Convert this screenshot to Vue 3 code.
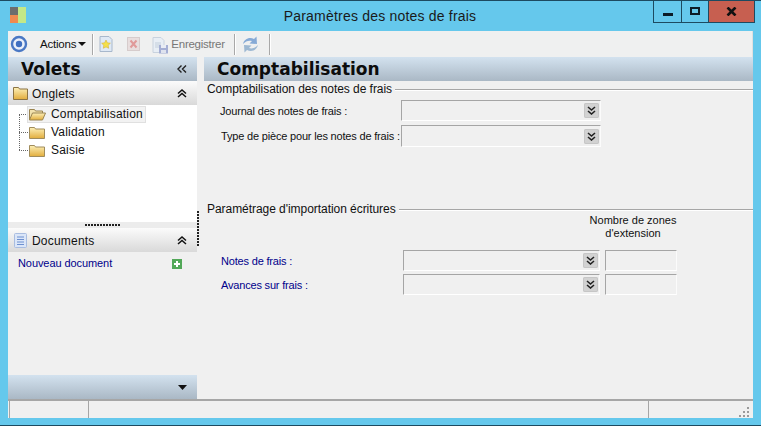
<script setup>
const tree = [
  { label: 'Comptabilisation', open: true },
  { label: 'Validation' },
  { label: 'Saisie' },
]

const importRows = ['Notes de frais :', 'Avances sur frais :']
</script>

<template>
  <div class="window">
    <svg width="0" height="0" class="defs">
      <defs>
        <linearGradient id="gold" x1="0" y1="0" x2="0" y2="1">
          <stop offset="0" stop-color="#fdf0b8" />
          <stop offset="1" stop-color="#e2ad3c" />
        </linearGradient>
      </defs>
    </svg>

    <div class="titlebar">
      <svg class="app-icon" width="16" height="16" viewBox="0 0 16 16">
        <rect x="0" y="0" width="8" height="8" fill="#6d6d6d" />
        <rect x="0" y="8" width="8" height="8" fill="#f08a50" />
        <rect x="8" y="0" width="8" height="16" fill="#c4e888" />
      </svg>
      <div class="title">Paramètres des notes de frais</div>
      <div class="win-buttons">
        <div class="win-btn min"><span class="min-bar"></span></div>
        <div class="win-btn max"><span class="max-box"></span></div>
        <div class="win-btn close">
          <svg width="11" height="9" viewBox="0 0 11 9">
            <path d="M1.500 0.500 L9.500 8.500 M9.500 0.500 L1.500 8.500" stroke="#111" stroke-width="2.600" fill="none" />
          </svg>
        </div>
      </div>
    </div>

    <div class="client">
      <div class="toolbar">
        <svg class="tool-logo" width="18" height="18" viewBox="0 0 18 18">
          <circle cx="9" cy="9" r="7" fill="#eaf0fa" stroke="#4a78c4" stroke-width="2.400" />
          <circle cx="9" cy="9" r="3.200" fill="#3f6fc0" />
        </svg>
        <span class="actions">Actions</span>
        <span class="caret"></span>
        <span class="sep first"></span>
        <svg class="tool-icon" width="14" height="16" viewBox="0 0 14 16">
          <path d="M1 .5h9l3 3v12H1z" fill="#dfe9f5" stroke="#a8b8cc" />
          <path d="M7 4l1.400 2.800 3 .4-2.200 2.100.5 3L7 10.900l-2.700 1.400.5-3-2.200-2.100 3-.4z" fill="#f4e04a" stroke="#d0a830" stroke-width=".5" />
        </svg>
        <svg class="tool-icon del" width="14" height="16" viewBox="0 0 14 16">
          <rect x=".5" y="1.500" width="12" height="13" fill="#e8dede" stroke="#d6cccc" />
          <path d="M3.500 4.500l6 7M9.500 4.500l-6 7" stroke="#e09a9a" stroke-width="2" />
        </svg>
        <svg class="tool-icon save" width="17" height="17" viewBox="0 0 17 17">
          <path d="M1 .5h8l3 3v12H1z" fill="#e8eef5" stroke="#c8d2de" />
          <path d="M3 6h6M3 8h6M3 10h4" stroke="#c2cedb" />
          <rect x="7" y="8" width="9" height="8.500" fill="#a4aed4" />
          <rect x="9" y="8" width="5" height="3" fill="#e8ecf4" />
          <rect x="9" y="13" width="5" height="3" fill="#dfe3ee" />
        </svg>
        <span class="save-label">Enregistrer</span>
        <span class="sep second"></span>
        <svg class="tool-icon refresh" width="17" height="17" viewBox="0 0 17 17">
          <path d="M1 8C2 3.500 7 0.500 12 3l2.500-2.500.5 7.500-7.500-.5 2.500-2.500C7 4 3.500 5 1 8z" fill="#86aad6" />
          <path d="M16 9c-1 4.500-6 7.500-11 5l-2.500 2.500L2 9l7.500.5L7 12c3 1 6.500 0 9-3z" fill="#9db8d2" />
        </svg>
        <span class="sep third"></span>
      </div>

      <div class="body">
        <aside class="left">
          <div class="blue-head volets">
            <span>Volets</span>
            <svg width="10" height="8" viewBox="0 0 10 8">
              <path d="M4.500 .5L1 4l3.500 3.500M9 .5L5.500 4 9 7.500" stroke="#222" stroke-width="1.400" fill="none" />
            </svg>
          </div>

          <div class="grey-head">
            <svg class="head-icon" width="15" height="14" viewBox="0 0 15 14">
              <path d="M.5 1.500h5l1 1.500h8v10.500H.5z" fill="url(#gold)" stroke="#8c7444" />
            </svg>
            <span class="head-label">Onglets</span>
            <svg class="chev" width="10" height="9" viewBox="0 0 10 9">
              <path d="M1 4.500L5 1l4 3.500M1 8L5 4.500 9 8" stroke="#111" stroke-width="1.500" fill="none" />
            </svg>
          </div>

          <div class="tree">
            <div v-for="(item, i) in tree" :key="item.label" class="tree-row" :class="{ last: i === tree.length - 1 }">
              <span class="branch"></span>
              <div class="tree-item" :class="{ selected: item.open }">
                <svg width="17" height="13" viewBox="0 0 17 13">
                  <template v-if="item.open">
                    <path d="M.5 12V1.500h5l1 1.500h7V5" fill="#f2e2ae" stroke="#9a8450" />
                    <path d="M.5 12l3-7h13l-3 7z" fill="url(#gold)" stroke="#9a8450" />
                  </template>
                  <template v-else>
                    <path d="M.5 1.500h5l1 1.500h9v9.500H.5z" fill="url(#gold)" stroke="#a08c5c" />
                  </template>
                </svg>
                <span>{{ item.label }}</span>
              </div>
            </div>
          </div>

          <div class="split-h"><span class="dots-h"></span></div>

          <div class="grey-head">
            <svg class="head-icon doc" width="13" height="15" viewBox="0 0 13 15">
              <rect x=".5" y=".5" width="12" height="14" rx="1" fill="#dbe6f8" stroke="#a9bde0" />
              <path d="M3 4h7M3 6.500h7M3 9h7M3 11.500h7" stroke="#6d90d0" />
            </svg>
            <span class="head-label">Documents</span>
            <svg class="chev" width="10" height="9" viewBox="0 0 10 9">
              <path d="M1 4.500L5 1l4 3.500M1 8L5 4.500 9 8" stroke="#111" stroke-width="1.500" fill="none" />
            </svg>
          </div>

          <div class="doc-panel">
            <span class="doc-link">Nouveau document</span>
            <svg width="10" height="10" viewBox="0 0 10 10">
              <rect width="10" height="10" fill="#52a858" />
              <path d="M5 2v6M2 5h6" stroke="#fff" stroke-width="2" />
            </svg>
          </div>

          <div class="blue-head bottom-bar">
            <svg width="9" height="5" viewBox="0 0 9 5"><path d="M0 0h9L4.500 5z" fill="#111" /></svg>
          </div>
        </aside>

        <div class="split-v"><span class="dots-v"></span></div>

        <main class="right">
          <div class="blue-head page-head">Comptabilisation</div>

          <section class="group first-group">
            <div class="group-title"><span>Comptabilisation des notes de frais</span><i></i></div>
            <div class="form-row">
              <label class="lbl">Journal des notes de frais :</label>
              <div class="combo">
                <span class="combo-btn">
                  <svg width="9" height="9" viewBox="0 0 9 9"><path d="M1 1l3.500 3L8 1M1 5l3.500 3L8 5" stroke="#222" stroke-width="1.600" fill="none" /></svg>
                </span>
              </div>
            </div>
            <div class="form-row second">
              <label class="lbl">Type de pièce pour les notes de frais :</label>
              <div class="combo">
                <span class="combo-btn">
                  <svg width="9" height="9" viewBox="0 0 9 9"><path d="M1 1l3.500 3L8 1M1 5l3.500 3L8 5" stroke="#222" stroke-width="1.600" fill="none" /></svg>
                </span>
              </div>
            </div>
          </section>

          <section class="group import-group">
            <div class="group-title"><span>Paramétrage d'importation écritures</span><i></i></div>
            <div class="ext-head">Nombre de zones<br />d'extension</div>
            <div v-for="row in importRows" :key="row" class="import-row">
              <label class="lbl blue">{{ row }}</label>
              <div class="combo">
                <span class="combo-btn">
                  <svg width="9" height="9" viewBox="0 0 9 9"><path d="M1 1l3.500 3L8 1M1 5l3.500 3L8 5" stroke="#222" stroke-width="1.600" fill="none" /></svg>
                </span>
              </div>
              <div class="ext-box"></div>
            </div>
          </section>
        </main>
      </div>

      <div class="status">
        <div class="cell c1"></div>
        <div class="cell c2"></div>
        <div class="cell c3">
          <svg width="11" height="11" viewBox="0 0 11 11" fill="#9a9a9a">
            <rect x="8" y="0" width="2" height="2" />
            <rect x="4" y="4" width="2" height="2" /><rect x="8" y="4" width="2" height="2" />
            <rect x="0" y="8" width="2" height="2" /><rect x="4" y="8" width="2" height="2" /><rect x="8" y="8" width="2" height="2" />
          </svg>
        </div>
      </div>
    </div>
  </div>
</template>

<style scoped>
.defs {
  position: absolute;
}

.window {
  width: 761px;
  height: 426px;
  box-sizing: border-box;
  background: #65c8ec;
  border-top: 1px solid #1d4a60;
  border-bottom: 1px solid #1d4a60;
  display: flex;
  flex-direction: column;
  font-family: "Liberation Sans", Arial, sans-serif;
  font-size: 12px;
  color: #111;
  overflow: hidden;
}

.titlebar {
  height: 30px;
  flex: none;
  display: flex;
  padding-left: 10px;
  position: relative;
}

.app-icon {
  margin-top: 6px;
}

.title {
  position: absolute;
  left: 0;
  right: 1px;
  top: 7px;
  text-align: center;
  font-size: 14px;
  letter-spacing: 0.2px;
  color: #1a1a1a;
}

.win-buttons {
  margin-left: auto;
  margin-right: 6px;
  display: flex;
  height: 21px;
  border: 1px solid #1d4a60;
  border-top: none;
  position: relative;
}

.win-btn {
  display: flex;
  align-items: center;
  justify-content: center;
  height: 21px;
}

.min {
  width: 27px;
  border-right: 1px solid #1d4a60;
}

.min-bar {
  width: 10px;
  height: 3px;
  background: #0c1c28;
  margin-top: 5px;
}

.max {
  width: 26px;
}

.max-box {
  width: 6px;
  height: 4px;
  border: 2px solid #0c1c28;
  margin-top: -1px;
}

.close {
  width: 45px;
  background: #c75f50;
  border-left: 1px solid #1d4a60;
}

.client {
  flex: 1;
  margin: 0 8px 7px;
  background: #f0f0f0;
  display: flex;
  flex-direction: column;
  min-height: 0;
}

.toolbar {
  height: 26px;
  flex: none;
  display: flex;
  align-items: center;
  background: #eff0f0;
  border-right: 1px solid #e0e0e0;
}

.tool-logo {
  margin-left: 2px;
}

.actions {
  margin-left: 12px;
  font-size: 11.5px;
  letter-spacing: -0.2px;
}

.caret {
  width: 0;
  height: 0;
  border-left: 4px solid transparent;
  border-right: 4px solid transparent;
  border-top: 4px solid #111;
  margin-left: 2px;
}

.sep {
  width: 1px;
  height: 21px;
  background: #a8a8a8;
  box-shadow: 1px 0 0 #fff;
}

.sep.first {
  margin-left: 6px;
}

.sep.second {
  margin-left: 9px;
}

.sep.third {
  margin-left: 10px;
}

.tool-icon {
  margin-left: 6px;
}

.tool-icon.del {
  margin-left: 14px;
}

.tool-icon.save {
  margin-left: 11px;
  margin-top: 2px;
}

.save-label {
  margin-left: 2px;
  font-size: 11.5px;
  letter-spacing: -0.25px;
  color: #777;
}

.tool-icon.refresh {
  margin-left: 7px;
}

.body {
  flex: 1;
  min-height: 0;
  display: flex;
}

.left {
  width: 189px;
  flex: none;
  display: flex;
  flex-direction: column;
}

.blue-head {
  background: linear-gradient(#d3e2ef, #aab8c5);
  flex: none;
}

.volets {
  height: 24px;
  display: flex;
  align-items: center;
  justify-content: space-between;
  padding: 0 10px 0 13px;
  font-family: "DejaVu Sans", sans-serif;
  font-size: 17px;
  font-weight: 700;
  color: #0c0c0c;
}

.grey-head {
  height: 24px;
  flex: none;
  display: flex;
  align-items: center;
  background: linear-gradient(#fbfbfb, #d9d9d9);
  padding: 0 10px 0 5px;
}

.head-icon {
  flex: none;
}

.head-icon.doc {
  margin-left: 1px;
  margin-right: 1px;
}

.head-label {
  margin-left: 4px;
  padding-top: 1px;
  flex: 1;
  letter-spacing: 0.2px;
}

.tree {
  height: 117px;
  flex: none;
  background: #fff;
  box-sizing: border-box;
}

.tree-row {
  height: 18px;
  display: flex;
  align-items: center;
  padding-left: 11px;
  position: relative;
}

.branch {
  width: 9px;
  flex: none;
  border-top: 1px dotted #666;
}

.tree-row::before {
  content: "";
  position: absolute;
  left: 11px;
  top: 9px;
  height: 18px;
  border-left: 1px dotted #666;
}

.tree-row.last::before {
  display: none;
}

.tree-item {
  display: flex;
  align-items: center;
  gap: 5px;
  height: 17px;
  padding: 0 2px 0 1px;
  border: 1px solid transparent;
  box-sizing: border-box;
  margin-left: -1px;
  letter-spacing: 0.2px;
}

.tree-item.selected {
  background: #f2f2f2;
  border-color: #e0e0e0;
}

.split-h {
  height: 6px;
  flex: none;
  display: flex;
  justify-content: center;
  align-items: center;
  background: #ececec;
}

.dots-h {
  width: 35px;
  height: 2px;
  background-image: repeating-linear-gradient(90deg, #222 0 2px, transparent 2px 3px);
  margin-left: -1px;
}

.doc-panel {
  flex: 1;
  display: flex;
  align-items: flex-start;
  justify-content: space-between;
  padding: 5px 15px 0 10px;
}

.doc-panel svg {
  margin-top: 2px;
}

.doc-link {
  color: #00008b;
  font-size: 11px;
  letter-spacing: -0.08px;
}

.bottom-bar {
  height: 24px;
  display: flex;
  align-items: center;
  justify-content: flex-end;
  padding-right: 10px;
}

.split-v {
  width: 7px;
  flex: none;
  display: flex;
  align-items: flex-start;
  background: #f0f0f0;
}

.dots-v {
  width: 2px;
  height: 35px;
  margin-top: 154px;
  margin-left: -4px;
  background-image: repeating-linear-gradient(#222 0 2px, transparent 2px 3px);
  position: relative;
  left: 4px;
  display: block;
}

.right {
  flex: 1;
  min-width: 0;
}

.page-head {
  height: 24px;
  line-height: 25px;
  padding-left: 13px;
  font-family: "DejaVu Sans", sans-serif;
  font-size: 17px;
  font-weight: 700;
  color: #0c0c0c;
}

.group-title {
  display: flex;
  align-items: center;
  gap: 3px;
  height: 14px;
  padding-left: 3px;
  font-size: 12px;
  letter-spacing: -0.05px;
}

.group-title i {
  flex: 1;
  height: 1px;
  background: #a6a6a6;
  box-shadow: 0 1px 0 #fff;
}

.first-group {
  padding-top: 1px;
}

.form-row {
  display: flex;
  align-items: center;
  margin-top: 4px;
  height: 21px;
}

.form-row.second {
  height: 22px;
}

.lbl {
  font-size: 11px;
  letter-spacing: -0.18px;
  box-sizing: border-box;
  white-space: nowrap;
}

.form-row .lbl {
  width: 197px;
  padding-left: 16px;
}

.form-row.second .lbl {
  padding-left: 17px;
}

.combo {
  width: 200px;
  height: 100%;
  box-sizing: border-box;
  border-top: 1px solid #a5a5a5;
  border-left: 1px solid #a5a5a5;
  border-bottom: 1px solid #fff;
  border-right: 1px solid #fbfbfb;
  background: #f0f0f0;
  display: flex;
  align-items: center;
  justify-content: flex-end;
  padding-right: 1px;
}

.combo-btn {
  width: 15px;
  height: 15px;
  background: #d2d2d2;
  border-radius: 2px;
  display: flex;
  align-items: center;
  justify-content: center;
  box-shadow: inset 0 0 0 1px #c6c6c6;
}

.import-group {
  margin-top: 55px;
}

.ext-head {
  margin-left: 361px;
  margin-top: -3px;
  width: 136px;
  text-align: center;
  font-size: 11px;
  line-height: 13px;
  height: 37px;
  padding-top: 1px;
  box-sizing: border-box;
}

.import-row {
  display: flex;
  align-items: center;
  height: 21px;
  margin-bottom: 3px;
}

.import-row .lbl {
  width: 199px;
  padding-left: 17px;
}

.lbl.blue {
  color: #00008b;
}

.import-row .combo {
  width: 197px;
}

.ext-box {
  width: 72px;
  height: 21px;
  box-sizing: border-box;
  margin-left: 5px;
  border-top: 1px solid #a5a5a5;
  border-left: 1px solid #a5a5a5;
  border-bottom: 1px solid #fff;
  border-right: 1px solid #fbfbfb;
}

.status {
  height: 19px;
  flex: none;
  display: flex;
  border-top: 2px solid #a6a6a6;
  box-sizing: border-box;
  padding-left: 1px;
}

.cell {
  border-left: 1px solid #a6a6a6;
  box-sizing: border-box;
}

.c1 {
  width: 79px;
}

.c2 {
  width: 560px;
}

.c3 {
  flex: 1;
  display: flex;
  align-items: flex-end;
  justify-content: flex-end;
  padding-right: 3px;
}
</style>

<style>
html, body {
  margin: 0;
  background: #65c8ec;
}
</style>
